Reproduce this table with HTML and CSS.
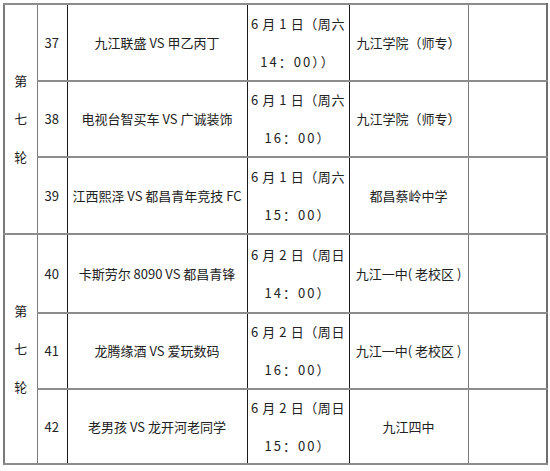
FILE: index.html
```html
<!DOCTYPE html>
<html lang="zh-CN">
<head>
<meta charset="utf-8">
<title>赛程表</title>
<link rel="stylesheet" href="styles.css">
</head>
<body>
<table class="schedule">
  <colgroup>
    <col class="c-round">
    <col class="c-no">
    <col class="c-match">
    <col class="c-date">
    <col class="c-venue">
    <col class="c-note">
  </colgroup>
  <tbody>
    <tr class="r1">
      <td class="round" rowspan="3">第<br>七<br>轮</td>
      <td class="no">37</td>
      <td class="match">九江联盛 VS 甲乙丙丁</td>
      <td class="date"><span class="day">6 月 1 日（周六</span><span class="time">14：00））</span></td>
      <td class="venue">九江学院（师专）</td>
      <td class="note"></td>
    </tr>
    <tr class="r2">
      <td class="no">38</td>
      <td class="match">电视台智买车 VS 广诚装饰</td>
      <td class="date"><span class="day">6 月 1 日（周六</span><span class="time">16：00）</span></td>
      <td class="venue">九江学院（师专）</td>
      <td class="note"></td>
    </tr>
    <tr class="r3">
      <td class="no">39</td>
      <td class="match">江西熙泽 VS 都昌青年竞技 FC</td>
      <td class="date"><span class="day">6 月 1 日（周六</span><span class="time">15：00）</span></td>
      <td class="venue">都昌蔡岭中学</td>
      <td class="note"></td>
    </tr>
    <tr class="r4">
      <td class="round" rowspan="3">第<br>七<br>轮</td>
      <td class="no">40</td>
      <td class="match">卡斯劳尔 8090 VS 都昌青锋</td>
      <td class="date"><span class="day">6 月 2 日（周日</span><span class="time">14：00）</span></td>
      <td class="venue">九江一中( 老校区 )</td>
      <td class="note"></td>
    </tr>
    <tr class="r5">
      <td class="no">41</td>
      <td class="match">龙腾缘酒 VS 爱玩数码</td>
      <td class="date"><span class="day">6 月 2 日（周日</span><span class="time">16：00）</span></td>
      <td class="venue">九江一中( 老校区 )</td>
      <td class="note"></td>
    </tr>
    <tr class="r6">
      <td class="no">42</td>
      <td class="match">老男孩 VS 龙开河老同学</td>
      <td class="date"><span class="day">6 月 2 日（周日</span><span class="time">15：00）</span></td>
      <td class="venue">九江四中</td>
      <td class="note"></td>
    </tr>
  </tbody>
</table>
</body>
</html>
```

FILE: styles.css
```css
html, body {
  margin: 0;
  padding: 0;
  background: #ffffff;
}

body {
  padding: 3px 0 0 3px;
  font-family: "Noto Sans CJK SC", "Noto Sans", sans-serif;
  font-size: 13px;
  color: #222222;
}

.schedule {
  border-collapse: collapse;
  table-layout: fixed;
  width: 543px;
}

.c-round { width: 33px; }
.c-no { width: 30px; }
.c-match { width: 180px; }
.c-date { width: 102px; }
.c-venue { width: 119px; }
.c-note { width: 79px; }

.schedule td {
  padding: 0;
  text-align: center;
  vertical-align: middle;
  white-space: nowrap;
  line-height: 20px;
  border-top: 2px solid #8c8c8c;
  border-bottom: 2px solid #8c8c8c;
  border-left: 1px solid #7a7a7a;
  border-right: 1px solid #7a7a7a;
}

.r1 { height: 77px; }
.r2 { height: 76px; }
.r3 { height: 77px; }
.r4 { height: 79px; }
.r5 { height: 76px; }
.r6 { height: 75px; }

.schedule td.round {
  line-height: 38px;
  border-left: 2px solid #7a7a7a;
}

.schedule td.no {
  text-align: left;
  padding-left: 7px;
  border-left: 1px solid #7a7a7a;
  border-right: 1px solid #1a1a1a;
}

.schedule td.match {
  border-right: 1px solid #1a1a1a;
}

.schedule td.date {
  border-right: 1px solid #1a1a1a;
}

.day,
.time {
  display: block;
}

.day {
  letter-spacing: 0.6px;
}

.time {
  margin-top: 18px;
  letter-spacing: 2px;
}

.schedule td.note {
  border-right: 2px solid #6e6e6e;
}
```
